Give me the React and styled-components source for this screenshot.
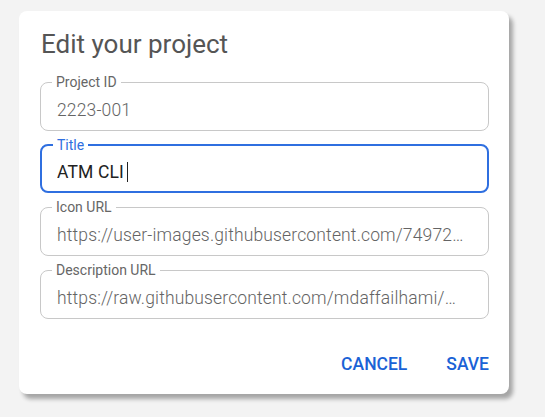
import styled, { createGlobalStyle } from "styled-components";

const GlobalStyle = createGlobalStyle`
  html, body {
    margin: 0;
    padding: 0;
    background: #f3f3f3;
    font-family: Roboto, "Liberation Sans", sans-serif;
  }
`;

// values as shown in the (narrow) dialog, already cut by the input
const fields = [
  { label: "Project ID", value: "2223-001" },
  { label: "Title", value: "ATM CLI", focused: true },
  {
    label: "Icon URL",
    value: "https://user-images.githubusercontent.com/74972…",
  },
  {
    label: "Description URL",
    value: "https://raw.githubusercontent.com/mdaffailhami/…",
  },
];

const Field = ({ label, value, focused }) => {
  return (
    <Box $focused={focused}>
      <Label $focused={focused}>{label}</Label>
      <Value $focused={focused}>
        {value}
        {focused && <Caret />}
      </Value>
    </Box>
  );
};

const App = () => {
  return (
    <Page>
      <GlobalStyle />
      <Dialog>
        <Heading>Edit your project</Heading>
        <Form>
          {fields.map((f) => (
            <Field key={f.label} {...f} />
          ))}
        </Form>
        <Actions>
          <TextButton>Cancel</TextButton>
          <TextButton>Save</TextButton>
        </Actions>
      </Dialog>
    </Page>
  );
};

const Page = styled.div`
  min-height: 417px;
  box-sizing: border-box;
  padding: 11px 0 0 19px;
`;

const Dialog = styled.section`
  width: 490px;
  box-sizing: border-box;
  background: #fff;
  border-radius: 8px;
  padding: 18px 20px 20px 21px;
  box-shadow: 4px 5px 4px rgba(0, 0, 0, 0.32);
`;

const Heading = styled.h2`
  margin: 0;
  font-size: 26px;
  line-height: 30px;
  font-weight: 400;
  color: #555;
  padding-left: 1px;
`;

const Form = styled.div`
  display: flex;
  flex-direction: column;
  gap: 6px;
  margin-top: 15px;
`;

const Box = styled.fieldset`
  margin: 0;
  min-width: 0;
  border: ${(p) => (p.$focused ? "2px solid #2f6fe0" : "1px solid #c8c8c8")};
  border-radius: 8px;
  padding: ${(p) => (p.$focused ? "0 15px" : "0 16px")};
`;

const Label = styled.legend`
  font-size: 14px;
  line-height: 16px;
  color: ${(p) => (p.$focused ? "#2f6fe0" : "#666")};
  padding: 0 4px;
  margin-left: ${(p) => (p.$focused ? "-4px" : "-5px")};
`;

const Value = styled.div`
  font-size: 17.5px;
  line-height: 20px;
  letter-spacing: 0.15px;
  font-weight: ${(p) => (p.$focused ? 400 : 300)};
  color: ${(p) => (p.$focused ? "#222" : "#646464")};
  white-space: nowrap;
  overflow: hidden;
  text-overflow: ellipsis;
  padding: ${(p) => (p.$focused ? "9px 0 9px" : "10px 0 10px")};
`;

const Caret = styled.span`
  display: inline-block;
  width: 1px;
  height: 20px;
  background: #222;
  margin-left: 3px;
  vertical-align: -4px;
`;

const Actions = styled.div`
  display: flex;
  justify-content: flex-end;
  gap: 39px;
  margin-top: 35px;
`;

const TextButton = styled.button`
  border: 0;
  background: none;
  padding: 0;
  font-family: Roboto, "Liberation Sans", sans-serif;
  font-size: 17.5px;
  line-height: 20px;
  font-weight: 500;
  text-transform: uppercase;
  color: #1a62d6;
  cursor: pointer;
`;

export default App;
